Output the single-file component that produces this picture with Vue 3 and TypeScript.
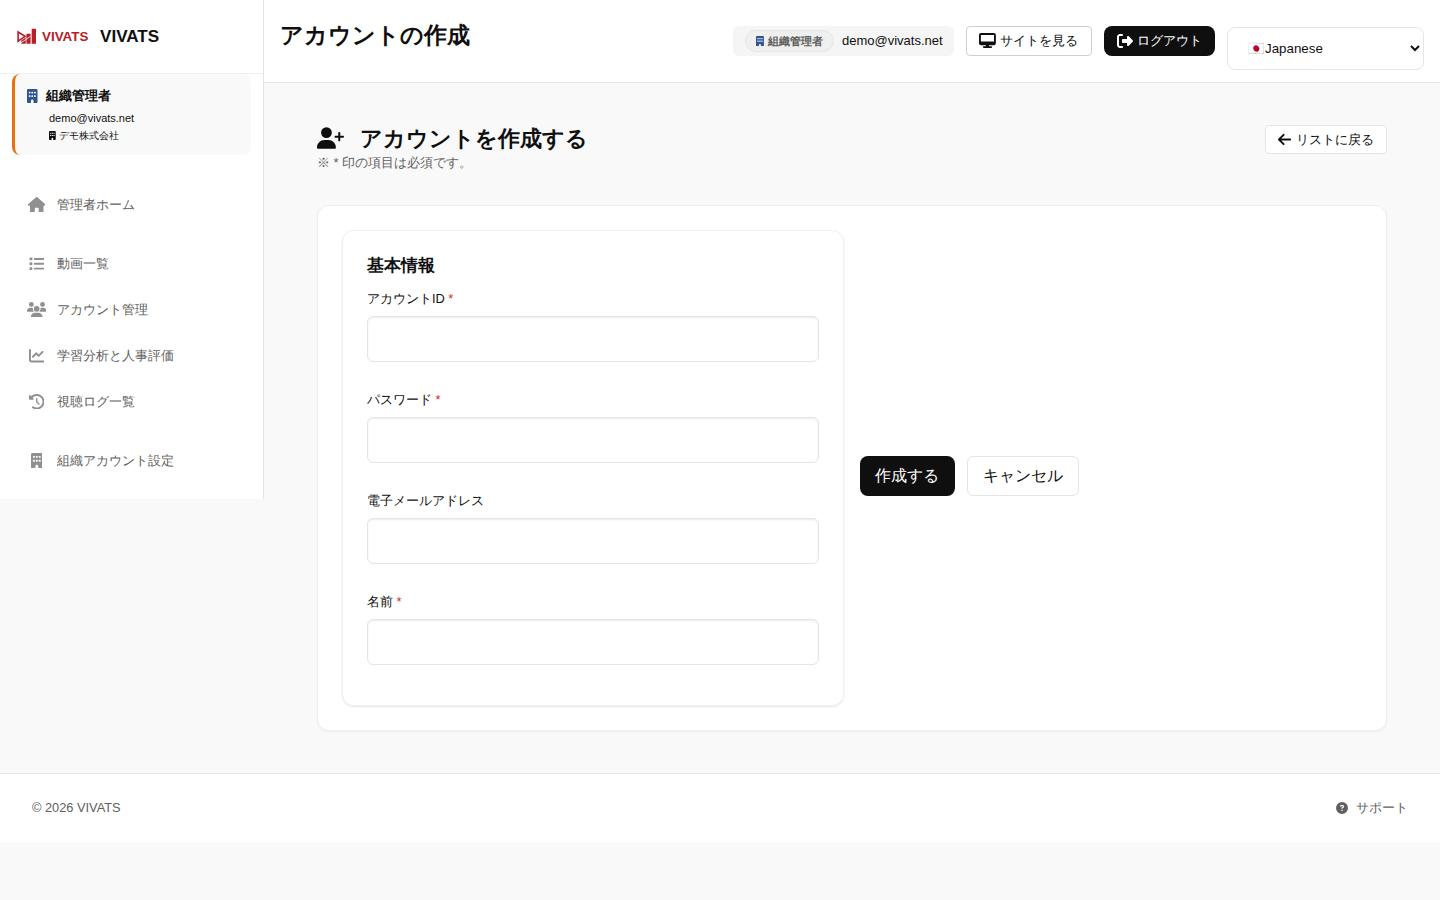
<script setup lang="ts">
import { ref } from 'vue'

interface Glyph { w: number; d: string }
interface NavItem { label: string; icon: string; gap?: boolean }
interface Field { label: string; required: boolean; key: string; type: string }

const glyphs: Record<string, Glyph> = {
  building: { w: 384, d: 'M48 0C21.5 0 0 21.5 0 48V464c0 26.5 21.5 48 48 48h96V432c0-26.5 21.5-48 48-48s48 21.5 48 48v80h96c26.5 0 48-21.5 48-48V48c0-26.5-21.5-48-48-48H48zM64 240c0-8.8 7.2-16 16-16h32c8.8 0 16 7.2 16 16v32c0 8.8-7.2 16-16 16H80c-8.8 0-16-7.2-16-16V240zm112-16h32c8.8 0 16 7.2 16 16v32c0 8.8-7.2 16-16 16H176c-8.8 0-16-7.2-16-16V240c0-8.8 7.2-16 16-16zm80 16c0-8.8 7.2-16 16-16h32c8.8 0 16 7.2 16 16v32c0 8.8-7.2 16-16 16H272c-8.8 0-16-7.2-16-16V240zM80 96h32c8.8 0 16 7.2 16 16v32c0 8.8-7.2 16-16 16H80c-8.8 0-16-7.2-16-16V112c0-8.8 7.2-16 16-16zm80 16c0-8.8 7.2-16 16-16h32c8.8 0 16 7.2 16 16v32c0 8.8-7.2 16-16 16H176c-8.8 0-16-7.2-16-16V112zM272 96h32c8.8 0 16 7.2 16 16v32c0 8.8-7.2 16-16 16H272c-8.8 0-16-7.2-16-16V112c0-8.8 7.2-16 16-16z' },
  home: { w: 576, d: 'M575.8 255.5c0 18-15 32.1-32 32.1h-32l.7 160.2c0 2.7-.2 5.4-.5 8.1V472c0 22.1-17.9 40-40 40H456c-1.1 0-2.2 0-3.3-.1c-1.4 .1-2.8 .1-4.2 .1H416 392c-22.1 0-40-17.9-40-40V448 384c0-17.7-14.3-32-32-32H256c-17.7 0-32 14.3-32 32v64 24c0 22.1-17.9 40-40 40H160 128.1c-1.5 0-3-.1-4.5-.2c-1.2 .1-2.4 .2-3.6 .2H104c-22.1 0-40-17.9-40-40V360c0-.9 0-1.9 .1-2.8V287.6H32c-18 0-32-14-32-32.1c0-9 3-17 10-24L266.4 8c7-7 15-8 22-8s15 2 21 7L564.8 231.5c8 7 12 15 11 24z' },
  list: { w: 512, d: 'M40 48C26.7 48 16 58.7 16 72v48c0 13.3 10.7 24 24 24H88c13.3 0 24-10.7 24-24V72c0-13.3-10.7-24-24-24H40zM192 64c-17.7 0-32 14.3-32 32s14.3 32 32 32H480c17.7 0 32-14.3 32-32s-14.3-32-32-32H192zm0 160c-17.7 0-32 14.3-32 32s14.3 32 32 32H480c17.7 0 32-14.3 32-32s-14.3-32-32-32H192zm0 160c-17.7 0-32 14.3-32 32s14.3 32 32 32H480c17.7 0 32-14.3 32-32s-14.3-32-32-32H192zM16 232v48c0 13.3 10.7 24 24 24H88c13.3 0 24-10.7 24-24V232c0-13.3-10.7-24-24-24H40c-13.3 0-24 10.7-24 24zM40 368c-13.3 0-24 10.7-24 24v48c0 13.3 10.7 24 24 24H88c13.3 0 24-10.7 24-24V392c0-13.3-10.7-24-24-24H40z' },
  users: { w: 640, d: 'M144 0a80 80 0 1 1 0 160A80 80 0 1 1 144 0zM512 0a80 80 0 1 1 0 160A80 80 0 1 1 512 0zM0 298.7C0 239.8 47.8 192 106.7 192h42.7c15.9 0 31 3.5 44.6 9.7c-1.3 7.2-1.9 14.7-1.9 22.3c0 38.2 16.8 72.5 43.3 96c-.2 0-.4 0-.7 0H21.3C9.6 320 0 310.4 0 298.7zM405.3 320c-.2 0-.4 0-.7 0c26.6-23.5 43.3-57.8 43.3-96c0-7.6-.7-15-1.9-22.3c13.6-6.3 28.7-9.7 44.6-9.7h42.7C592.2 192 640 239.8 640 298.7c0 11.8-9.6 21.3-21.3 21.3H405.3zM224 224a96 96 0 1 1 192 0 96 96 0 1 1 -192 0zM128 485.3C128 411.7 187.7 352 261.3 352H378.7C452.3 352 512 411.7 512 485.3c0 14.7-11.9 26.7-26.7 26.7H154.7c-14.7 0-26.7-11.9-26.7-26.7z' },
  chart: { w: 512, d: 'M64 64c0-17.7-14.3-32-32-32S0 46.3 0 64V400c0 44.2 35.8 80 80 80H480c17.7 0 32-14.3 32-32s-14.3-32-32-32H80c-8.8 0-16-7.2-16-16V64zm406.6 86.6c12.5-12.5 12.5-32.8 0-45.3s-32.8-12.5-45.3 0L320 210.7l-57.4-57.4c-12.5-12.5-32.8-12.5-45.3 0l-112 112c-12.5 12.5-12.5 32.8 0 45.3s32.8 12.5 45.3 0L240 221.3l57.4 57.4c12.5 12.5 32.8 12.5 45.3 0l128-128z' },
  history: { w: 512, d: 'M75 75L41 41C25.9 25.9 0 36.6 0 57.9V168c0 13.3 10.7 24 24 24H134.1c21.4 0 32.1-25.9 17-41l-30.8-30.8C155 85.5 203 64 256 64c106 0 192 86 192 192s-86 192-192 192c-40.8 0-78.6-12.7-109.7-34.4c-14.5-10.1-34.4-6.6-44.6 7.9s-6.6 34.4 7.9 44.6C151.2 495 201.7 512 256 512c141.4 0 256-114.6 256-256S397.4 0 256 0C185.3 0 121.3 28.7 75 75zm181 53c-13.3 0-24 10.7-24 24V256c0 6.4 2.5 12.5 7 17l72 72c9.4 9.4 24.6 9.4 33.9 0s9.4-24.6 0-33.9l-65-65V152c0-13.3-10.7-24-24-24z' },
  userPlus: { w: 640, d: 'M96 128a128 128 0 1 1 256 0A128 128 0 1 1 96 128zM0 482.3C0 383.8 79.8 304 178.3 304h91.4C368.2 304 448 383.8 448 482.3c0 16.4-13.3 29.7-29.7 29.7H29.7C13.3 512 0 498.7 0 482.3zM504 312V248H440c-13.3 0-24-10.7-24-24s10.7-24 24-24h64V136c0-13.3 10.7-24 24-24s24 10.7 24 24v64h64c13.3 0 24 10.7 24 24s-10.7 24-24 24H552v64c0 13.3-10.7 24-24 24s-24-10.7-24-24z' },
  desktop: { w: 576, d: 'M64 0C28.7 0 0 28.7 0 64V352c0 35.3 28.7 64 64 64H240l-10.7 32H160c-17.7 0-32 14.3-32 32s14.3 32 32 32H416c17.7 0 32-14.3 32-32s-14.3-32-32-32H346.7L336 416H512c35.3 0 64-28.7 64-64V64c0-35.3-28.7-64-64-64H64zM512 64V288H64V64H512z' },
  logout: { w: 512, d: 'M377.9 105.9L500.7 228.7c7.2 7.2 11.3 17.1 11.3 27.3s-4.1 20.1-11.3 27.3L377.9 406.1c-6.4 6.4-15 9.9-24 9.9c-18.7 0-33.9-15.2-33.9-33.9l0-62.1-128 0c-17.7 0-32-14.3-32-32l0-64c0-17.7 14.3-32 32-32l128 0 0-62.1c0-18.7 15.2-33.9 33.9-33.9c9 0 17.6 3.6 24 9.9zM160 96L96 96c-17.7 0-32 14.3-32 32l0 256c0 17.7 14.3 32 32 32l64 0c17.7 0 32 14.3 32 32s-14.3 32-32 32l-64 0c-53 0-96-43-96-96L0 128C0 75 43 32 96 32l64 0c17.7 0 32 14.3 32 32s-14.3 32-32 32z' },
  arrowLeft: { w: 448, d: 'M9.4 233.4c-12.5 12.5-12.5 32.8 0 45.3l160 160c12.5 12.5 32.8 12.5 45.3 0s12.5-32.8 0-45.3L109.2 288 416 288c17.7 0 32-14.3 32-32s-14.3-32-32-32l-306.7 0L214.6 118.6c12.5-12.5 12.5-32.8 0-45.3s-32.8-12.5-45.3 0l-160 160z' },
  question: { w: 512, d: 'M256 512A256 256 0 1 0 256 0a256 256 0 1 0 0 512zM169.8 165.3c7.9-22.3 29.1-37.3 52.8-37.3h58.3c34.9 0 63.1 28.3 63.1 63.1c0 22.6-12.1 43.5-31.7 54.8L280 264.4c-.2 13-10.9 23.6-24 23.6c-13.3 0-24-10.7-24-24V250.5c0-8.6 4.6-16.5 12.1-20.8l44.3-25.4c4.7-2.7 7.6-7.7 7.6-13.1c0-8.4-6.8-15.1-15.1-15.1H222.6c-3.4 0-6.4 2.1-7.5 5.3l-.4 1.2c-4.4 12.5-18.2 19-30.6 14.6s-19-18.2-14.6-30.6l.4-1.2zM224 352a32 32 0 1 1 64 0 32 32 0 1 1 -64 0z' }
}

const box = (name: string) => `0 0 ${glyphs[name].w} 512`

const nav: NavItem[] = [
  { label: '管理者ホーム', icon: 'home' },
  { label: '動画一覧', icon: 'list', gap: true },
  { label: 'アカウント管理', icon: 'users' },
  { label: '学習分析と人事評価', icon: 'chart' },
  { label: '視聴ログ一覧', icon: 'history' },
  { label: '組織アカウント設定', icon: 'building', gap: true }
]

const fields: Field[] = [
  { label: 'アカウントID', required: true, key: 'account', type: 'text' },
  { label: 'パスワード', required: true, key: 'password', type: 'password' },
  { label: '電子メールアドレス', required: false, key: 'email', type: 'email' },
  { label: '名前', required: true, key: 'name', type: 'text' }
]

const form = ref<Record<string, string>>({ account: '', password: '', email: '', name: '' })
const language = ref('ja')
</script>

<template>
  <div class="page" lang="ja">
    <div class="shell">
      <aside class="sidebar">
        <div class="brand">
          <svg class="logo" viewBox="0 0 73 16">
            <path fill="#b5202b" d="M5.3 12.6l4.4-3v6.1H5.3zM10.4 5.7h4.2v10h-4.2zM15.7 .7H20v15h-4.3z" />
            <path fill="#fff" stroke="#b5202b" stroke-width="1.6" d="M2.1 4v9.2l7-4.9z" />
            <path stroke="#fff" stroke-width=".8" d="M4.2 15.4l10.4-7.2" />
            <text x="26" y="13" textLength="46.3" lengthAdjust="spacingAndGlyphs">VIVATS</text>
          </svg>
          <span class="brand-name">VIVATS</span>
        </div>
        <div class="profile">
          <div class="profile-role">
            <svg class="icon" :viewBox="box('building')"><path :d="glyphs.building.d" /></svg>
            <span>組織管理者</span>
          </div>
          <div class="profile-mail">demo@vivats.net</div>
          <div class="profile-org">
            <svg class="icon" :viewBox="box('building')"><path :d="glyphs.building.d" /></svg>
            <span>デモ株式会社</span>
          </div>
        </div>
        <nav class="menu">
          <a v-for="item in nav" :key="item.label" class="menu-item" :class="{ gap: item.gap }">
            <span class="menu-icon">
              <svg class="icon" :viewBox="box(item.icon)"><path :d="glyphs[item.icon].d" /></svg>
            </span>
            <span>{{ item.label }}</span>
          </a>
        </nav>
      </aside>

      <div class="content">
        <header class="topbar">
          <h1>アカウントの作成</h1>
          <div class="tools">
            <div class="user-chip">
              <span class="role-badge">
                <svg class="icon" :viewBox="box('building')"><path :d="glyphs.building.d" /></svg>
                <span>組織管理者</span>
              </span>
              <span class="user-mail">demo@vivats.net</span>
            </div>
            <button class="btn site">
              <svg class="icon" :viewBox="box('desktop')"><path :d="glyphs.desktop.d" /></svg>
              <span>サイトを見る</span>
            </button>
            <button class="btn logout">
              <svg class="icon" :viewBox="box('logout')"><path :d="glyphs.logout.d" /></svg>
              <span>ログアウト</span>
            </button>
            <select v-model="language" class="language">
              <option value="ja">🇯🇵Japanese</option>
            </select>
          </div>
        </header>

        <main class="main">
          <div class="heading">
            <div>
              <h2>
                <svg class="icon" :viewBox="box('userPlus')"><path :d="glyphs.userPlus.d" /></svg>
                <span>アカウントを作成する</span>
              </h2>
              <p>※ * 印の項目は必須です。</p>
            </div>
            <button class="btn back">
              <svg class="icon" :viewBox="box('arrowLeft')"><path :d="glyphs.arrowLeft.d" /></svg>
              <span>リストに戻る</span>
            </button>
          </div>

          <form class="panel" @submit.prevent>
            <section class="card">
              <h3>基本情報</h3>
              <div v-for="field in fields" :key="field.key" class="field">
                <label :for="field.key">{{ field.label }}<span v-if="field.required" class="required"> *</span></label>
                <input :id="field.key" v-model="form[field.key]" :type="field.type">
              </div>
            </section>
            <div class="actions">
              <button class="action primary" type="submit">作成する</button>
              <button class="action" type="button">キャンセル</button>
            </div>
          </form>
        </main>
      </div>
    </div>

    <footer class="footer">
      <span>© 2026 VIVATS</span>
      <a class="support">
        <svg class="icon" :viewBox="box('question')"><path :d="glyphs.question.d" /></svg>
        <span>サポート</span>
      </a>
    </footer>
  </div>
</template>

<style>
body { margin: 0; background: #f9f9f9; }
</style>

<style scoped>
.page, .page * { box-sizing: border-box; }
.page {
  font-family: "Liberation Sans", Arial, sans-serif;
  font-size: 13px;
  color: #0f0f0f;
}
h1, h2, h3, p { margin: 0; }
button, select, input { font-family: inherit; color: inherit; }
.icon { display: block; flex: none; fill: currentColor; height: 1em; }
.shell { display: flex; align-items: flex-start; height: 773px; }

.sidebar { width: 264px; height: 499px; flex: none; background: #fff; border-right: 1px solid #e5e5e5; }
.brand { height: 74px; display: flex; align-items: center; gap: 11px; padding: 0 16px 1px; border-bottom: 1px solid #f0f0f0; }
.logo { width: 73px; height: 16px; }
.logo text { font: bold 13px "Liberation Sans", Arial, sans-serif; fill: #b5202b; }
.brand-name { margin-top: 1px; font-size: 17.1px; font-weight: 700; line-height: 20px; }
.profile { margin: 0 12px; height: 81px; padding: 12px 11px; background: #f9f9f9; border-left: 3px solid #e8710a; border-radius: 8px; }
.profile-role { display: flex; align-items: center; gap: 8px; height: 20px; padding-left: 1px; font-size: 13px; font-weight: 700; }
.profile-role .icon { height: 14px; color: #2c5591; }
.profile-mail { margin: 4px 0 0 23px; height: 17px; line-height: 17px; font-size: 11px; }
.profile-org { display: flex; align-items: center; gap: 3px; margin-left: 23px; height: 17px; font-size: 10px; }
.profile-org .icon { height: 9px; }
.menu { padding-top: 27px; }
.menu-item { display: flex; align-items: center; gap: 10px; height: 46px; padding-left: 26px; color: #606060; }
.menu-item.gap { margin-top: 13px; }
.menu-icon { width: 21px; display: flex; justify-content: center; padding-bottom: 1px; font-size: 15.5px; color: #909090; }

.content { flex: 1; min-width: 0; }
.topbar { height: 83px; display: flex; justify-content: space-between; padding: 0 16px; background: #fff; border-bottom: 1px solid #e5e5e5; }
h1 { margin-top: 17px; font-size: 23px; line-height: 36px; font-weight: 700; }
.tools { display: flex; align-items: flex-start; gap: 12px; padding-top: 26px; }
.user-chip { display: flex; align-items: center; gap: 8px; width: 221px; height: 30px; padding: 0 12px; background: #f5f5f5; border-radius: 6px; white-space: nowrap; }
.user-mail { padding-bottom: 1px; }
.role-badge { display: flex; align-items: center; gap: 4px; width: 89px; height: 22px; padding-left: 10px; border: 1px solid #e5e5e5; border-radius: 11px; background: #efefef; color: #606060; font-size: 11px; font-weight: 700; flex: none; }
.role-badge .icon { height: 10.5px; color: #2c5591; }
.btn { display: flex; align-items: center; gap: 4px; padding: 0 12px; font-size: 13px; white-space: nowrap; border: 1px solid #e5e5e5; border-radius: 4px; background: #fff; }
.site { width: 126px; height: 30px; border-color: #cccfd8; }
.site .icon { height: 15px; margin-bottom: 1px; }
.site span, .back span { padding-left: .5px; }
.logout { width: 111px; height: 30px; padding-left: 13px; gap: 3.5px; border: 0; border-radius: 8px; background: #0f0f0f; color: #fff; }
.logout .icon { height: 16px; margin-bottom: 1px; }
.language { width: 197px; height: 43px; margin-top: 1px; padding: 0 0 0 16px; font-size: 13.333px; background: #fff; border: 1px solid #e5e5e5; border-radius: 8px; }

.main { padding: 42px 53px 0; }
.heading { display: flex; justify-content: space-between; align-items: flex-start; height: 80px; }
h2 { display: flex; align-items: center; gap: 16px; font-size: 22px; line-height: 28px; height: 27px; font-weight: 700; }
h2 .icon { height: 22px; width: 27px; margin-bottom: 1px; }
.heading p { font-size: 13px; line-height: 20px; margin-top: 1px; color: #606060; }
.back { width: 122px; height: 29px; }
.back .icon { height: 15px; }
.panel { display: flex; align-items: center; gap: 16px; height: 526px; padding: 24px; background: #fff; border: 1px solid #f0f0f0; border-radius: 12px; box-shadow: 0 1px 2px rgba(0, 0, 0, .05); }
.card { width: 502px; height: 476px; padding: 24px; border: 1px solid #f0f0f0; border-radius: 12px; box-shadow: 0 1px 2px rgba(0, 0, 0, .1); }
h3 { font-size: 17px; line-height: 22px; font-weight: 700; }
.field { height: 101px; padding-top: 12px; }
.field label { display: block; height: 27px; line-height: 20px; font-size: 12.8px; }
.required { color: #dc2626; }
.field input { display: block; width: 100%; height: 46px; padding: 0 12px; font-size: 16px; border: 1px solid #e5e5e5; border-radius: 6px; outline: none; box-shadow: inset 0 1px 2px rgba(0, 0, 0, .08); background: #fff; }
.actions { display: flex; gap: 12px; margin-top: 15px; }
.action { height: 40px; padding: 2px 15px 0; font-size: 16px; border: 1px solid #e5e5e5; border-radius: 6px; background: #fff; }
.action.primary { width: 95px; padding: 2px 1px 0 0; border: 0; border-radius: 8px; background: #0f0f0f; color: #fff; }

.footer { display: flex; justify-content: space-between; align-items: center; height: 69px; padding: 0 32px 1px; background: #fff; border-top: 1px solid #e5e5e5; color: #606060; font-size: 12.8px; }
.support { display: flex; align-items: center; gap: 8px; }
.support .icon { height: 12px; }
.support span { padding-top: 2px; }
</style>
